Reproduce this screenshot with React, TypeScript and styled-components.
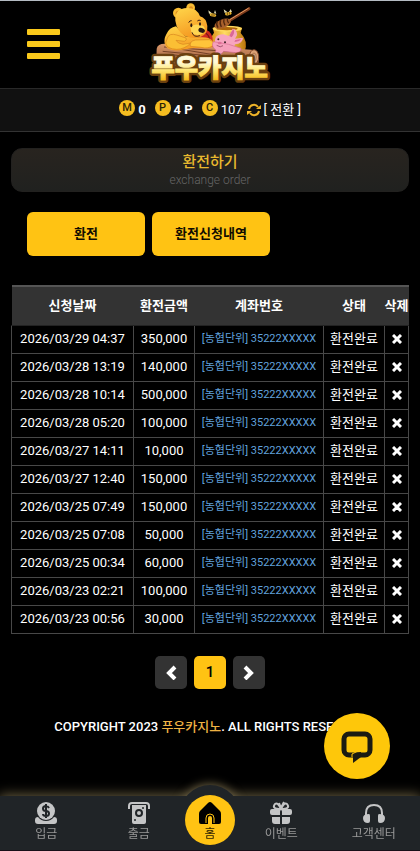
import React from "react";
import styled, { createGlobalStyle, css } from "styled-components";

const GlobalStyle = createGlobalStyle`
  *, *::before, *::after { box-sizing: border-box; }
  body {
    margin: 0;
    background: #000;
    color: #fff;
    font-family: Roboto, "Noto Sans CJK KR", sans-serif;
    font-size: 13px;
    line-height: 20px;
  }
  button { font: inherit; border: 0; padding: 0; cursor: pointer; }
  a { color: inherit; text-decoration: none; }
  svg { display: block; flex: none; }
`;

const gold = "#ffc313";

const Page = styled.div`
  padding-bottom: 104px;
`;

const Header = styled.header`
  display: grid;
  grid-template-columns: 1fr auto 1fr;
  align-items: center;
  height: 88px;
  border-top: 1px solid #b4bbc2;
`;

const MenuButton = styled.button`
  justify-self: start;
  display: grid;
  gap: 6px;
  width: 33px;
  margin-left: 27px;
  padding-bottom: 2px;
  background: none;
`;

const MenuBar = styled.span`
  height: 6px;
  border-radius: 1px;
  background: #fac91b;
`;

const InfoBar = styled.div`
  display: flex;
  justify-content: center;
  align-items: center;
  gap: 9px;
  height: 44px;
  border-top: 1px solid #292929;
  border-bottom: 1px solid #333;
  background: #111;
`;

const Balance = styled.span<{ $light?: boolean }>`
  display: flex;
  align-items: center;
  gap: 3px;
  font-weight: ${(p) => (p.$light ? 400 : 700)};
`;

const Coin = styled.span`
  display: flex;
  align-items: center;
  justify-content: center;
  width: 16px;
  height: 16px;
  margin-bottom: 4px;
  border-radius: 50%;
  background: #f5bd20;
  color: #2b2205;
  font-size: 11px;
  font-weight: 500;
  line-height: 16px;
`;

const ConvertButton = styled.button`
  display: flex;
  align-items: center;
  gap: 3px;
  margin-left: 1px;
  background: none;
  color: #fff;
`;

const Main = styled.main`
  padding: 16px 11px 0;
`;

const Banner = styled.section`
  padding: 4px 0 2px;
  border: 1px solid #22211f;
  border-radius: 11px;
  background: linear-gradient(#28241f, #20211f);
  text-align: center;
`;

const BannerTitle = styled.h1`
  margin: 0;
  color: #e9b92e;
  font-size: 15px;
  font-weight: 500;
  line-height: 18px;
`;

const BannerNote = styled.p`
  margin: 0;
  color: #666;
  font-size: 12px;
  font-weight: 300;
  line-height: 18px;
`;

const Actions = styled.div`
  display: flex;
  gap: 7px;
  padding: 20px 16px 29px;
`;

const ActionButton = styled.button`
  flex: 0 1 118px;
  height: 44px;
  border-radius: 6px;
  background: ${gold};
  color: #100c00;
  font-weight: 700;
`;

const Table = styled.table`
  width: 100%;
  border-collapse: collapse;
  table-layout: fixed;
  text-align: center;
  white-space: nowrap;
`;

const Col = styled.col<{ $width?: number }>`
  ${(p) => p.$width && css`width: ${p.$width}px;`}
`;

const HeadCell = styled.th`
  height: 39px;
  padding: 0;
  border-top: 2px solid #555;
  border-bottom: 1px solid #222;
  background: #333;
  font-weight: 700;
`;

const Cell = styled.td<{ $account?: boolean }>`
  height: 28px;
  padding: 0;
  border: 1px solid #484848;
  ${(p) =>
    p.$account &&
    css`
      color: #61a2dd;
      font-size: 11px;
    `}
`;

const DeleteButton = styled.button`
  display: flex;
  justify-content: center;
  width: 100%;
  background: none;
  color: #fff;
`;

const Pager = styled.nav`
  display: flex;
  justify-content: center;
  gap: 7px;
  padding: 22px 0 28px;
`;

const PageButton = styled.button<{ $current?: boolean }>`
  display: flex;
  align-items: center;
  justify-content: center;
  width: 32px;
  height: 33px;
  border-radius: 5px;
  background: ${(p) => (p.$current ? gold : "#333")};
  color: ${(p) => (p.$current ? "#000" : "#fff")};
  font-size: 15px;
  font-weight: 500;
`;

const Footer = styled.footer`
  text-align: center;
  font-weight: 500;
  white-space: nowrap;
`;

const Brand = styled.span`
  color: #efb344;
`;

const ChatButton = styled.button`
  position: fixed;
  right: 30px;
  bottom: 72px;
  z-index: 3;
  display: flex;
  align-items: center;
  justify-content: center;
  width: 66px;
  height: 66px;
  border-radius: 50%;
  background: #fec70a;
`;

const BottomNav = styled.nav`
  position: fixed;
  inset: auto 0 0;
  z-index: 2;
  display: flex;
  height: 55px;
  border-bottom: 1px solid #170e18;
  background: #202427;
  box-shadow: 0 0 12px 1px #6d6244;
`;

const NavLink = styled.a`
  flex: 1;
  display: flex;
  flex-direction: column;
  align-items: center;
  padding-top: 5px;
  color: #999;
  font-size: 12px;
  line-height: 18px;
`;

const HomeSlot = styled.div`
  position: relative;
  flex: none;
  width: 50px;

  &::before {
    content: "";
    position: absolute;
    top: -11px;
    left: -5px;
    width: 60px;
    height: 60px;
    border-radius: 50%;
    background: #202427;
    box-shadow: 0 0 10px 1px #6d6244;
    clip-path: inset(-20px -20px 49px);
  }
`;

const HomeLink = styled.a`
  position: relative;
  display: flex;
  flex-direction: column;
  align-items: center;
  width: 50px;
  height: 50px;
  margin-top: -1px;
  padding-top: 6px;
  border-radius: 50%;
  background: ${gold};
  color: #221a03;
  font-size: 12px;
  line-height: 18px;
`;

function Logo() {
  return (
    <svg width="140" height="86" viewBox="0 3 420 258" role="img" aria-label="푸우카지노">
      <defs>
        <linearGradient id="letter" x1="0" y1="0" x2="0" y2="1">
          <stop offset="0.4" stopColor="#fff9d8" />
          <stop offset="0.6" stopColor="#ffe878" />
          <stop offset="0.9" stopColor="#f5b916" />
        </linearGradient>
        <linearGradient id="fur" x1="0" y1="0" x2="0.4" y2="1">
          <stop offset="0" stopColor="#ffd64a" />
          <stop offset="1" stopColor="#f59a22" />
        </linearGradient>
        <linearGradient id="log" x1="0" y1="0" x2="0" y2="1">
          <stop offset="0" stopColor="#dc9a6b" />
          <stop offset="1" stopColor="#82432a" />
        </linearGradient>
        <linearGradient id="honey" x1="0" y1="0" x2="1" y2="0">
          <stop offset="0" stopColor="#d98b13" />
          <stop offset="0.4" stopColor="#ffdd63" />
          <stop offset="1" stopColor="#bd750b" />
        </linearGradient>
      </defs>
      <path d="M218 80h88l-4 16q25 25 11 59h-96q-14-38 5-60z" fill="url(#honey)" />
      <ellipse cx="262" cy="83" rx="44" ry="9" fill="#ffd95c" />
      <ellipse cx="261" cy="83" rx="32" ry="5" fill="#ad650b" />
      <path d="M50 143q3-16 27-15l257 18q22 3 22 26v38H48z" fill="url(#log)" />
      <path d="M72 138l235 16M68 151l174 17M118 144l186 31M96 161l133 17M282 154l52 16" stroke="#744026" strokeWidth="3" fill="none" />
      <ellipse cx="342" cy="168" rx="14" ry="22" fill="#dba276" stroke="#7a4528" strokeWidth="3" />
      <ellipse cx="342" cy="168" rx="7" ry="12" fill="none" stroke="#99603d" strokeWidth="2" />
      <path d="M188 82q24 7 29 26l3 29-37-4-7-25z" fill="#cf2920" />
      <path d="M192 93q16 8 17 24" fill="none" stroke="#7f1716" strokeWidth="4" />
      <path d="M79 100q9-21 29-24l28 30 42 3q30-3 42 13 5 13-12 20l-48-1-42 7q-39 3-43-18-5-14 4-30z" fill="url(#fur)" />
      <circle cx="115" cy="36" r="16" fill="#f9bd34" />
      <circle cx="115" cy="37" r="8" fill="#dc8b20" />
      <circle cx="152" cy="20" r="13" fill="#f8bd34" />
      <circle cx="153" cy="22" r="6" fill="#dc8b20" />
      <path d="M106 59q-2-37 35-38 30-1 39 25 19 5 22 29 2 25-21 33-21 8-47-4-23-12-28-45z" fill="url(#fur)" />
      <path d="M151 79q13-15 39-4 8 8 2 20-17 13-37 2z" fill="#ffd653" />
      <path d="M82 111q6-16 28-9l28 9q4 7-5 10l-25-3q5 10 21 12l24-4q-20 19-43 19-30-1-33-19z" fill="#fbbf34" stroke="#d6851f" strokeWidth="2" />
      <path d="M151 136q-4-15 15-19l42-1q19 7 9 19-13 9-34 4z" fill="#ffc43a" stroke="#d6851f" strokeWidth="2" />
      <ellipse cx="154" cy="73" rx="3" ry="6" fill="#281811" />
      <ellipse cx="180" cy="69" rx="3" ry="5" fill="#281811" />
      <ellipse cx="185" cy="88" rx="10" ry="7" fill="#251612" transform="rotate(20 185 88)" />
      <path d="M156 94q5 17 24 10M146 65q3-7 9-6M172 60q5-5 10-1" fill="none" stroke="#442414" strokeWidth="3" />
      <path d="M230 145q-17-45 20-45l17 5 11-22q13 0 13 20l-6 10 24-3q0 17-24 20-4 20-25 20z" fill="#f7a5bf" />
      <path d="M268 105q8-18 13-20 5 12-6 24zM286 117l18-3q-7 10-21 8z" fill="#da6896" />
      <path d="M220 122q-8 14 8 25l-5 14q14 7 28-10l37 4q15 0 15-13l-37-12z" fill="#f6a0bb" stroke="#d46c92" strokeWidth="2" />
      <circle cx="235" cy="115" r="3" fill="#3b2024" />
      <circle cx="255" cy="124" r="3" fill="#3b2024" />
      <ellipse cx="239" cy="126" rx="6" ry="4" fill="#df6f95" />
      <path d="M230 133q12 8 19 1" fill="none" stroke="#7b304b" strokeWidth="2" />
      <path d="M260 64l67-41" stroke="#7d3b1c" strokeWidth="9" strokeLinecap="round" />
      <path d="M263 60l62-38" stroke="#e39b62" strokeWidth="3" strokeLinecap="round" />
      <ellipse cx="248" cy="68" rx="26" ry="13" fill="#a8602b" transform="rotate(-22 248 68)" />
      <path d="M232 61q-5 9 2 19M242 57q-4 10 2 21M252 54q-3 9 3 19M262 52q-1 9 4 14" fill="none" stroke="#4f260e" strokeWidth="4" />
      <ellipse cx="219" cy="42" rx="10" ry="5" fill="#ecb72e" transform="rotate(15 219 42)" />
      <path d="M216 38v8M222 39v8" stroke="#34230d" strokeWidth="2" />
      <path d="M216 37l-11-9 2 10zM222 37l3-10 4 11z" fill="#e6dfb2" />
      <ellipse cx="265" cy="38" rx="10" ry="5" fill="#ecb72e" transform="rotate(-10 265 38)" />
      <path d="M262 34v8M268 33v8" stroke="#34230d" strokeWidth="2" />
      <path d="M262 33l-11-8 3 11zM267 33l5-9 4 9z" fill="#e6dfb2" />
      <text
        x="209"
        y="228"
        textAnchor="middle"
        fontFamily="Noto Sans CJK KR, sans-serif"
        fontSize="76"
        fontWeight="900"
        fill="none"
        stroke="#6b400f"
        strokeWidth="18"
        strokeLinejoin="round"
        aria-hidden="true"
      >
        푸우카지노
      </text>
      <text
        x="209"
        y="228"
        textAnchor="middle"
        fontFamily="Noto Sans CJK KR, sans-serif"
        fontSize="76"
        fontWeight="900"
        fill="url(#letter)"
        stroke="url(#letter)"
        strokeWidth="3"
      >
        푸우카지노
      </text>
    </svg>
  );
}

function RefreshIcon() {
  return (
    <svg width="14" height="14" viewBox="0 0 14 14" fill="none" stroke="#f0b529" strokeWidth="2" aria-hidden="true">
      <path d="M2 6a5 5 0 0 1 9-2M12 8a5 5 0 0 1-9 2" />
      <path d="M9 6h5V2zM5 8H0v4z" fill="#f0b529" stroke="none" />
    </svg>
  );
}

function CrossIcon() {
  return (
    <svg width="10" height="10" viewBox="0 0 10 10" stroke="currentColor" strokeWidth="3" aria-hidden="true">
      <path d="M1 1l8 8M9 1L1 9" />
    </svg>
  );
}

function ChevronIcon({ right = false }: { right?: boolean }) {
  return (
    <svg width="12" height="16" viewBox="0 0 12 16" fill="none" stroke="currentColor" strokeWidth="4" aria-hidden="true">
      <path d={right ? "M2 3l6 6-6 6" : "M10 3L4 9l6 6"} />
    </svg>
  );
}

function ChatIcon() {
  return (
    <svg width="34" height="34" viewBox="0 0 34 34" aria-hidden="true">
      <rect x="4" y="5" width="26" height="21" rx="5" fill="none" stroke="#1b1b12" strokeWidth="5" />
      <path d="M13 24l8-1v5l-8 6z" fill="#1b1b12" />
      <path d="M12 28v-3l6-3" fill="none" stroke="#fec70a" strokeWidth="1" />
    </svg>
  );
}

function DepositIcon() {
  return (
    <svg width="24" height="24" viewBox="0 0 24 24" aria-hidden="true">
      <path d="M1 19q0-3 3-3 3 4 8 4t8-4q3 0 3 3v1q0 3-3 3H4q-3 0-3-3z" fill="#c4c5c6" />
      <circle cx="12" cy="10" r="9" fill="#c4c5c6" />
      <path d="M15 7q-1-2-3-2-3 0-3 2.500T12 10t3 2.500T12 15q-3 0-3-2M12 3v14" fill="none" stroke="#202427" strokeWidth="2" />
    </svg>
  );
}

function WithdrawIcon() {
  return (
    <svg width="24" height="24" viewBox="0 0 24 24" aria-hidden="true">
      <path d="M2 8V5q0-3 3-3h14q3 0 3 3v3" fill="none" stroke="#c4c5c6" strokeWidth="2" />
      <path d="M5 4h14v17q0 2-2 2H7q-2 0-2-2z" fill="#c4c5c6" />
      <circle cx="12" cy="12" r="3" fill="none" stroke="#202427" strokeWidth="2" />
      <circle cx="8" cy="19" r="1" fill="#202427" />
      <circle cx="16" cy="7" r="1" fill="#202427" />
    </svg>
  );
}

function HomeIcon() {
  return (
    <svg width="24" height="24" viewBox="0 0 24 24" aria-hidden="true">
      <path d="M10 2q2-2 4 0l8 8q1 1 1 3v8q0 2-2 2H3q-2 0-2-2v-8q0-2 1-3z" fill="#000" />
      <path d="M8 22v-5q0-4 4-4t4 4v5" fill="none" stroke={gold} strokeWidth="1" />
      <path d="M10 23v-6q0-2 2-2t2 2v6z" fill={gold} />
    </svg>
  );
}

function GiftIcon() {
  return (
    <svg width="24" height="24" viewBox="0 0 24 24" aria-hidden="true">
      <path d="M12 8Q2 8 6 3q3-2 6 5 3-7 6-5 4 5-6 5M12 7l-2-5M12 7l3-6" fill="none" stroke="#c4c5c6" strokeWidth="2" />
      <path d="M3 8h8v6H3q-2 0-2-2v-2q0-2 2-2zM13 8h8q2 0 2 2v2q0 2-2 2h-8zM3 16h8v7H6q-3 0-3-3zM13 16h8v4q0 3-3 3h-5z" fill="#c4c5c6" />
    </svg>
  );
}

function HeadsetIcon() {
  return (
    <svg width="24" height="24" viewBox="0 0 24 24" aria-hidden="true">
      <path d="M4 15v-3q0-8 8-8t8 8v3" fill="none" stroke="#c4c5c6" strokeWidth="2" />
      <path d="M7 13q1 0 1 2v5q0 2-2 2-5 0-5-5 0-4 6-4zM17 13q-1 0-1 2v5q0 2 2 2 5 0 5-5 0-4-6-4z" fill="#c4c5c6" />
    </svg>
  );
}

const withdrawals = [
  ["2026/03/29 04:37", "350,000"],
  ["2026/03/28 13:19", "140,000"],
  ["2026/03/28 10:14", "500,000"],
  ["2026/03/28 05:20", "100,000"],
  ["2026/03/27 14:11", "10,000"],
  ["2026/03/27 12:40", "150,000"],
  ["2026/03/25 07:49", "150,000"],
  ["2026/03/25 07:08", "50,000"],
  ["2026/03/25 00:34", "60,000"],
  ["2026/03/23 02:21", "100,000"],
  ["2026/03/23 00:56", "30,000"],
];

export default function App() {
  return (
    <>
      <GlobalStyle />
      <Page>
        <Header>
          <MenuButton aria-label="메뉴">
            <MenuBar />
            <MenuBar />
            <MenuBar />
          </MenuButton>
          <Logo />
        </Header>
        <InfoBar>
          <Balance><Coin>M</Coin>0</Balance>
          <Balance><Coin>P</Coin>4 P</Balance>
          <Balance $light>
            <Coin>C</Coin>107
            <ConvertButton><RefreshIcon />[ 전환 ]</ConvertButton>
          </Balance>
        </InfoBar>
        <Main>
          <Banner>
            <BannerTitle>환전하기</BannerTitle>
            <BannerNote>exchange order</BannerNote>
          </Banner>
          <Actions>
            <ActionButton>환전</ActionButton>
            <ActionButton>환전신청내역</ActionButton>
          </Actions>
          <Table>
            <colgroup>
              <Col $width={122} />
              <Col $width={61} />
              <Col />
              <Col $width={61} />
              <Col $width={24} />
            </colgroup>
            <thead>
              <tr>
                <HeadCell scope="col">신청날짜</HeadCell>
                <HeadCell scope="col">환전금액</HeadCell>
                <HeadCell scope="col">계좌번호</HeadCell>
                <HeadCell scope="col">상태</HeadCell>
                <HeadCell scope="col">삭제</HeadCell>
              </tr>
            </thead>
            <tbody>
              {withdrawals.map(([date, amount]) => (
                <tr key={date}>
                  <Cell>{date}</Cell>
                  <Cell>{amount}</Cell>
                  <Cell $account>[농협단위] 35222XXXXX</Cell>
                  <Cell>환전완료</Cell>
                  <Cell>
                    <DeleteButton aria-label="삭제"><CrossIcon /></DeleteButton>
                  </Cell>
                </tr>
              ))}
            </tbody>
          </Table>
          <Pager aria-label="페이지">
            <PageButton aria-label="이전"><ChevronIcon /></PageButton>
            <PageButton $current aria-current="page">1</PageButton>
            <PageButton aria-label="다음"><ChevronIcon right /></PageButton>
          </Pager>
        </Main>
        <Footer>
          COPYRIGHT 2023 <Brand>푸우카지노</Brand>. ALL RIGHTS RESERVED
        </Footer>
      </Page>
      <ChatButton aria-label="채팅"><ChatIcon /></ChatButton>
      <BottomNav aria-label="주요 메뉴">
        <NavLink href="#deposit"><DepositIcon />입금</NavLink>
        <NavLink href="#withdraw"><WithdrawIcon />출금</NavLink>
        <HomeSlot>
          <HomeLink href="#home"><HomeIcon />홈</HomeLink>
        </HomeSlot>
        <NavLink href="#event"><GiftIcon />이벤트</NavLink>
        <NavLink href="#support"><HeadsetIcon />고객센터</NavLink>
      </BottomNav>
    </>
  );
}
